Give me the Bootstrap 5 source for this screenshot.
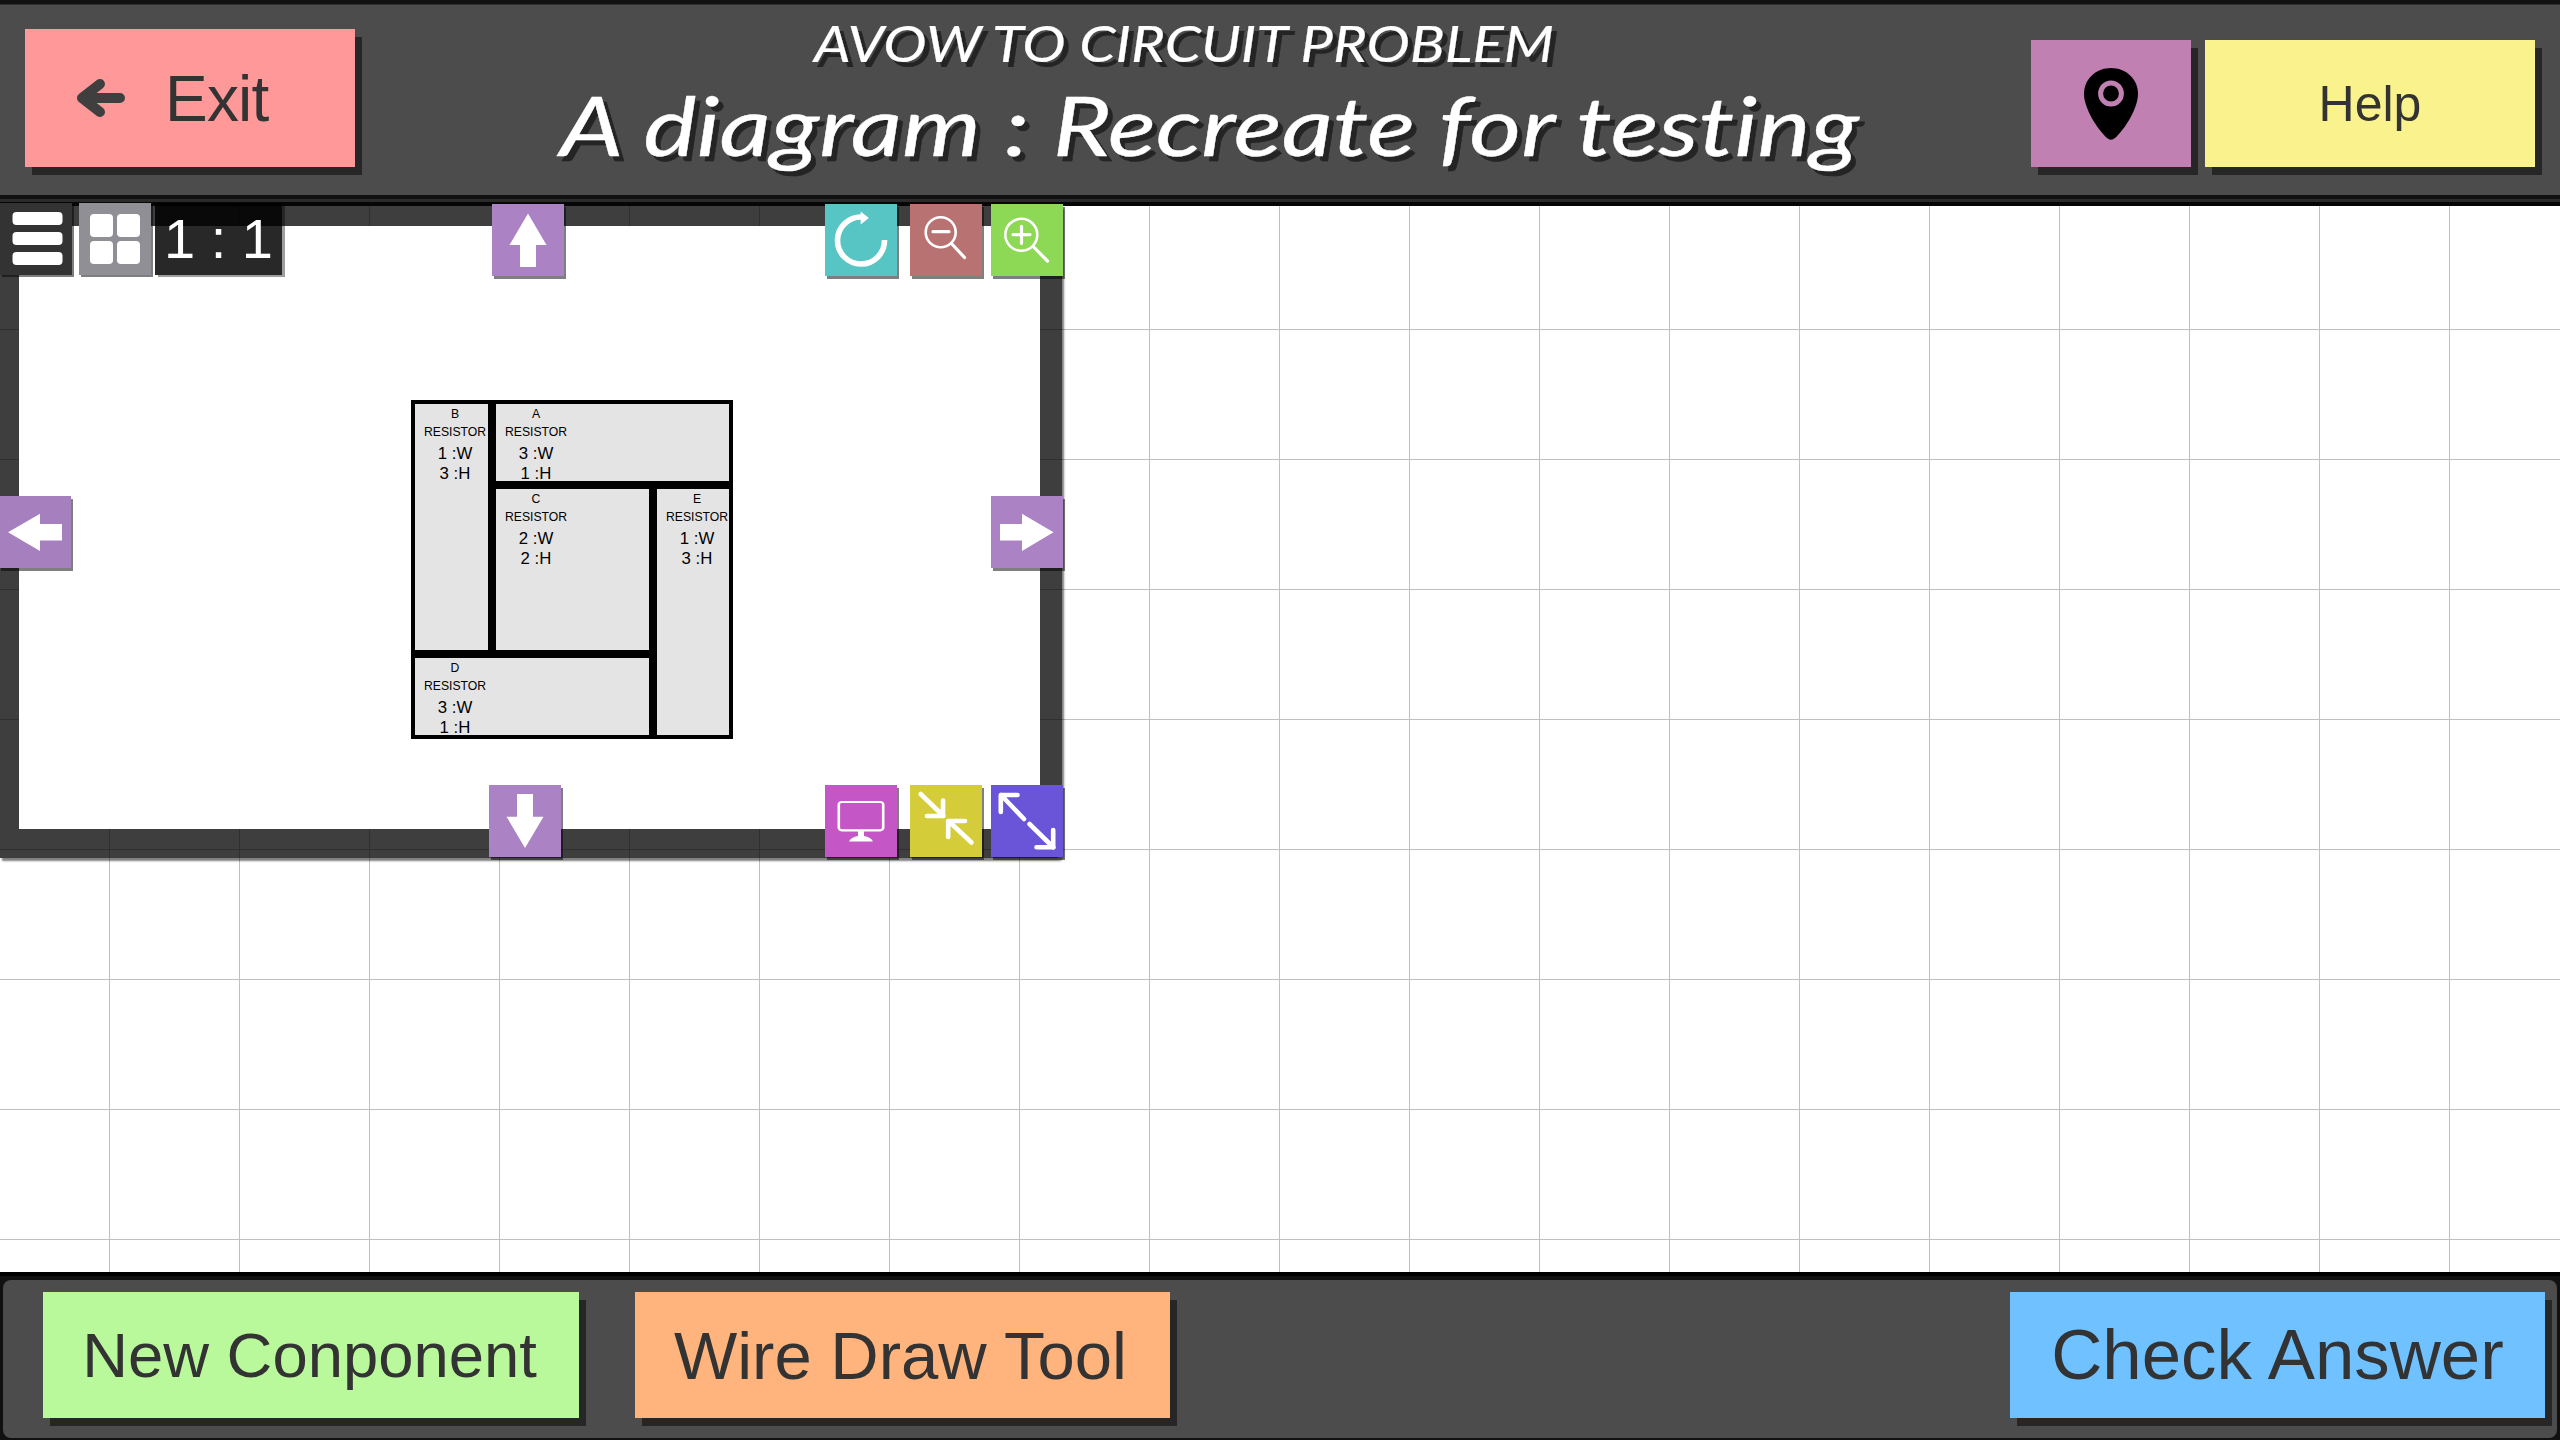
<!DOCTYPE html>
<html lang="en">
<head>
<meta charset="utf-8">
<title>Avow to circuit problem</title>
<link href="https://cdn.jsdelivr.net/npm/bootstrap@5.3.0/dist/css/bootstrap.min.css" rel="stylesheet">
<style>
body{font-family:"Liberation Sans",Arial,sans-serif;background:#fff;color:#333}
.topbar{height:206px;background:#4c4c4c;padding:25px 25px 0;border-top:4px solid #121212;
  box-shadow:inset 0 1px #303030,inset 0 -4px #060606,inset 0 -7px #2b2b2b,inset 0 -11px #111}
.tile{border:0;border-radius:0;padding:0;color:#333;line-height:1;box-shadow:7px 8px #262626;display:flex;align-items:center;justify-content:center;flex:none;white-space:nowrap}
.tile-exit{width:330px;height:138px;background:#f99;font-size:64px;justify-content:flex-start;padding-left:49px}
.tile-exit span{margin-left:35px;padding-top:1px;letter-spacing:-.8px}
.tile-pin{width:160px;height:127px;background:#c180b2;margin:11px 14px 0 0}
.tile-help{width:330px;height:127px;background:#faf28c;font-size:50px;margin-top:11px}
.heading{width:1310px;margin-left:199px;font-family:Lato,sans-serif;font-style:italic;font-variant-ligatures:none;white-space:nowrap}
.heading svg{display:block;overflow:visible;filter:drop-shadow(5px 5px .6px #242424)}
.board{background-color:#fff;background-image:linear-gradient(90deg,#c0c0c0 1px,transparent 1px),linear-gradient(#c0c0c0 1px,transparent 1px);background-size:130px 130px;background-position:109px 0,0 123px}
.viewer{width:1062px;height:652px;background:rgba(0,0,0,.755);padding:20px 22px 29px 19px;border-bottom-right-radius:5px;box-shadow:2px 3px 2px rgba(0,0,0,.5)}
.paper{background:#fff;padding:174px 0 0 392px;height:603px}
.avow{width:322px;height:339px;background:#000;padding:4px;display:grid;grid-template-columns:73px 153px 72px;grid-template-rows:77px 161px 77px;gap:8px;
  grid-template-areas:"b a a" "b c e" "d d e"}
.block{background:#e4e4e4;color:#000;min-width:0;min-height:0;padding-top:1px}
.block div{width:80px;text-align:center;line-height:18px;font-size:12.2px;white-space:nowrap}
.block .dim{font-size:16.8px;line-height:20px}
.block .dim-first{padding-top:3px}
.tool{position:absolute;width:72px;height:72px;border:0;padding:0;box-shadow:2px 3px rgba(0,0,0,.5);z-index:2}
.tool svg{display:block;width:72px;height:72px}
.top-row{top:-2px}.mid-row{top:290px}.low-row{top:579px}
.left-pair{top:-3px;box-shadow:2px 2px rgba(0,0,0,.5)}
.ratio{width:127px;background:rgba(0,0,0,.845);color:#fff;font-size:56px;line-height:71px;text-align:center;box-shadow:3px 2px rgba(0,0,0,.38);white-space:pre}
.bottombar{height:168px;background:#111;border-top:4px solid #000;padding:4px 3px 2px}
.bottom-panel{height:158px;background:#4c4c4c;border-radius:8px;padding:12px 12px 0 40px}
.action{width:536px;height:126px}
.action-new{background:#b9f99c;font-size:63.4px;margin-right:56px;padding:2px 3px 0 0}
.action-wire{background:#ffb47e;font-size:67px;width:535px;padding:1px 4px 0 0}
.action-check{background:#6fc1ff;font-size:70.8px;width:535px;padding-top:1px}
.ln{fill:none;stroke:#fff;stroke-linecap:round;stroke-linejoin:round}
</style>
</head>
<body class="vh-100 d-flex flex-column overflow-hidden">
<header class="topbar d-flex align-items-start flex-shrink-0">
  <button class="tile tile-exit">
    <svg width="56" height="44" viewBox="0 0 56 44"><path d="M8 22H46M26 8L8 22L26 36" fill="none" stroke="#3f3f3f" stroke-width="10" stroke-linecap="round" stroke-linejoin="round"/></svg>
    <span>Exit</span>
  </button>
  <div class="heading">
    <svg width="1310" height="150" viewBox="554 29 1310 150" fill="#fff" stroke="#fff" stroke-linejoin="round">
      <text x="814" y="61.500" font-size="50" textLength="740" lengthAdjust="spacingAndGlyphs" stroke-width=".2">AVOW TO CIRCUIT PROBLEM</text>
      <text x="560" y="156" font-size="82" textLength="1299" lengthAdjust="spacingAndGlyphs" stroke-width=".4">A diagram : Recreate for testing</text>
    </svg>
  </div>
  <div class="d-flex ms-auto">
    <button class="tile tile-pin" aria-label="Location">
      <svg width="54" height="72" viewBox="0 0 54 72"><path d="M27 0C12 0 0 11 0 26C0 40 13 61 23 70Q27 73.500 31 70C41 61 54 40 54 26C54 11 42 0 27 0Z"/><ellipse cx="27" cy="25.500" rx="10.400" ry="10.600" fill="none" stroke="#c180b2" stroke-width="5"/></svg>
    </button>
    <button class="tile tile-help">Help</button>
  </div>
</header>

<main class="board flex-grow-1">
  <section class="viewer position-relative">
    <div class="paper">
      <div class="avow">
        <div class="block" style="grid-area:b"><div>B</div><div>RESISTOR</div><div class="dim dim-first">1 :W</div><div class="dim">3 :H</div></div>
        <div class="block" style="grid-area:a"><div>A</div><div>RESISTOR</div><div class="dim dim-first">3 :W</div><div class="dim">1 :H</div></div>
        <div class="block" style="grid-area:c"><div>C</div><div>RESISTOR</div><div class="dim dim-first">2 :W</div><div class="dim">2 :H</div></div>
        <div class="block" style="grid-area:e"><div>E</div><div>RESISTOR</div><div class="dim dim-first">1 :W</div><div class="dim">3 :H</div></div>
        <div class="block" style="grid-area:d"><div>D</div><div>RESISTOR</div><div class="dim dim-first">3 :W</div><div class="dim">1 :H</div></div>
      </div>
    </div>

    <button class="tool left-pair" style="left:0;background:#333" aria-label="Menu"><svg viewBox="0 0 72 72" fill="#fff"><rect x="12.500" y="9" width="50" height="13" rx="4"/><rect x="12.500" y="29" width="50" height="13" rx="4"/><rect x="12.500" y="49" width="50" height="13" rx="4"/></svg></button>
    <button class="tool left-pair" style="left:79px;background:#908f96" aria-label="Tiles"><svg viewBox="0 0 72 72" fill="#fff"><rect x="11" y="11" width="23" height="23" rx="4"/><rect x="38" y="11" width="23" height="23" rx="4"/><rect x="11" y="38" width="23" height="23" rx="4"/><rect x="38" y="38" width="23" height="23" rx="4"/></svg></button>
    <div class="tool left-pair ratio" style="left:155px">1 : 1</div>
    <button class="tool top-row" style="left:492px;background:#ab82c4" aria-label="Up"><svg viewBox="0 0 72 72"><path d="M36 9.500L54.500 41H44V63H28V41H17.500Z" fill="#fff"/></svg></button>
    <button class="tool top-row" style="left:825px;background:#58c5c5" aria-label="Reset"><svg viewBox="0 0 72 72"><path d="M37 13A23.500 23.500 0 1 0 59.500 36" fill="none" stroke="#fff" stroke-width="5.600"/><path d="M35.700 7.500L43.800 14L35.700 20.500Z" fill="#fff"/></svg></button>
    <button class="tool top-row" style="left:910px;background:#b87272" aria-label="Zoom out"><svg viewBox="0 0 72 72" class="ln" stroke-width="2.600"><circle cx="30.700" cy="28.300" r="15"/><path d="M23 27.700H39M41.500 39.500L54.500 53.500" stroke-width="3.200"/></svg></button>
    <button class="tool top-row" style="left:991px;background:#8dd854" aria-label="Zoom in"><svg viewBox="0 0 72 72" class="ln" stroke-width="2.600"><circle cx="30.300" cy="30.800" r="16"/><path d="M22 30.600H39M30.500 22.300V39.300M42.300 42.700L56.500 57" stroke-width="3.200"/></svg></button>
    <button class="tool mid-row" style="left:-1px;background:#a67fbe" aria-label="Left"><svg viewBox="0 0 72 72"><path d="M9 36.300L41 17.800V28H63V44.500H41V55Z" fill="#fff"/></svg></button>
    <button class="tool mid-row" style="left:991px;background:#ab82c4" aria-label="Right"><svg viewBox="0 0 72 72"><path d="M62.500 36.300L31 17.800V28H9V44.500H31V55Z" fill="#fff"/></svg></button>
    <button class="tool low-row" style="left:489px;background:#ab82c4" aria-label="Down"><svg viewBox="0 0 72 72"><path d="M36 63L54.500 31.700H44V9H28V31.700H17.500Z" fill="#fff"/></svg></button>
    <button class="tool low-row" style="left:825px;background:#c456c6" aria-label="Screen"><svg viewBox="0 0 72 72"><rect x="13.800" y="17" width="44.400" height="34.300" rx="3" class="ln" stroke-width="2.600" transform="translate(0 3) scale(1 .825)"/><path d="M33 46H39V51Q46 52 48 56.600H24Q26 52 33 51Z" fill="#fff"/></svg></button>
    <button class="tool low-row" style="left:910px;background:#d4cc38" aria-label="Shrink"><svg viewBox="0 0 72 72" class="ln" stroke-width="4.600"><path d="M10.600 9L33.500 31M33 15.500V31H17M61.500 57.500L38.500 36M55 36H38.200V52"/></svg></button>
    <button class="tool low-row" style="left:991px;background:#6a54d8" aria-label="Expand"><svg viewBox="0 0 72 72" class="ln" stroke-width="4.600"><path d="M26.500 10H9.800V27M10 10L33 34M38.500 39L62.500 62.500M62.200 45V62.300H45.500"/></svg></button>
  </section>
</main>

<footer class="bottombar flex-shrink-0">
  <div class="bottom-panel d-flex align-items-start">
    <button class="tile action action-new">New Conponent</button>
    <button class="tile action action-wire">Wire Draw Tool</button>
    <button class="tile action action-check ms-auto">Check Answer</button>
  </div>
</footer>
<script src="https://cdn.jsdelivr.net/npm/bootstrap@5.3.0/dist/js/bootstrap.bundle.min.js"></script>
</body>
</html>
